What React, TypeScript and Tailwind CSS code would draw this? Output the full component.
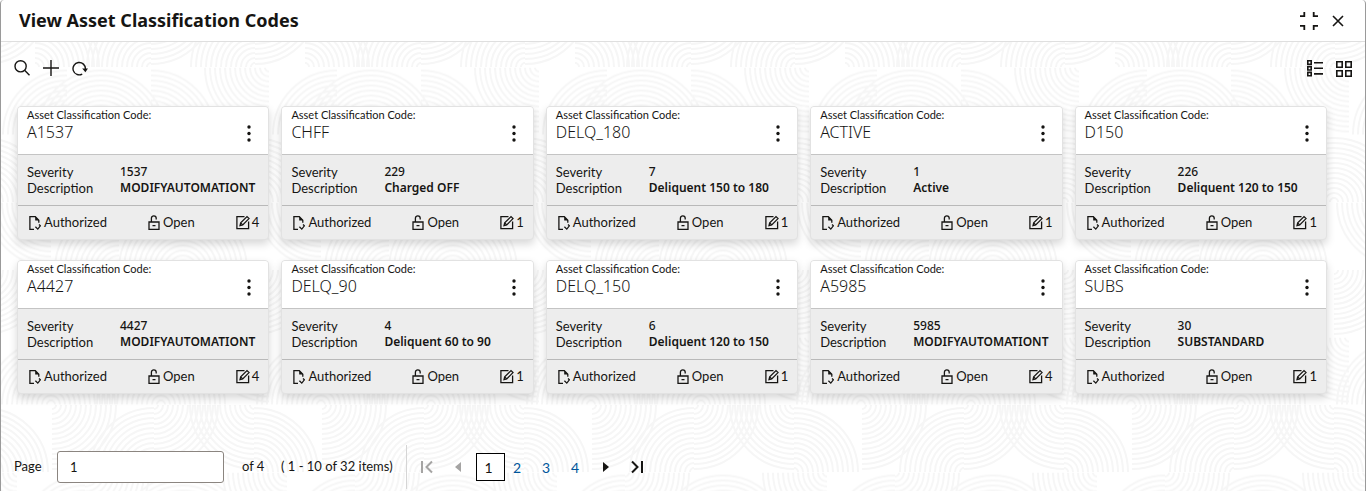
import React from 'react';

type Fan = { x: number; y: number; dx: 1 | -1; dy: 1 | -1 };

const RINGS = Array.from({ length: 13 }, (_, i) => 4 + i * 5);

// quarter-circle fans, one list per row of the repeating backdrop
const FAN_ROWS: Fan[][] = [
  [
    { x: 34, y: 67, dx: 1, dy: -1 },
    { x: 150, y: 67, dx: -1, dy: -1 },
    { x: 150, y: 0, dx: 1, dy: 1 },
    { x: 254, y: 67, dx: -1, dy: -1 },
    { x: 254, y: 0, dx: 1, dy: 1 },
  ],
  [
    { x: 100, y: 67, dx: -1, dy: -1 },
    { x: 100, y: 67, dx: 1, dy: -1 },
    { x: 150, y: 67, dx: 1, dy: -1 },
    { x: 268, y: 0, dx: -1, dy: 1 },
    { x: 66, y: 67, dx: -1, dy: -1 },
  ],
  [
    { x: 253, y: 67, dx: 1, dy: -1 },
    { x: 253, y: 67, dx: -1, dy: -1 },
    { x: 130, y: 67, dx: 1, dy: -1 },
    { x: 50, y: 0, dx: 1, dy: 1 },
  ],
  [
    { x: 50, y: 0, dx: -1, dy: 1 },
    { x: 182, y: 67, dx: -1, dy: -1 },
    { x: 182, y: 67, dx: 1, dy: -1 },
    { x: 118, y: 67, dx: -1, dy: -1 },
  ],
  [
    { x: 253, y: 0, dx: 1, dy: 1 },
    { x: 150, y: 0, dx: -1, dy: 1 },
    { x: 150, y: 67, dx: 1, dy: -1 },
  ],
  [
    { x: 50, y: 67, dx: -1, dy: -1 },
    { x: 50, y: 67, dx: 1, dy: -1 },
    { x: 268, y: 0, dx: -1, dy: 1 },
    { x: 160, y: 67, dx: -1, dy: -1 },
    { x: 160, y: 67, dx: 1, dy: -1 },
  ],
  [
    { x: 253, y: 67, dx: 1, dy: -1 },
    { x: 51, y: 0, dx: 1, dy: 1 },
    { x: 153, y: 67, dx: -1, dy: -1 },
    { x: 153, y: 0, dx: 1, dy: 1 },
    { x: 253, y: 0, dx: -1, dy: 1 },
  ],
  [
    { x: 182, y: 67, dx: -1, dy: -1 },
    { x: 182, y: 67, dx: 1, dy: -1 },
    { x: 16, y: 0, dx: -1, dy: 1 },
    { x: 84, y: 67, dx: -1, dy: -1 },
    { x: 84, y: 0, dx: 1, dy: 1 },
  ],
];

const fanPath = ({ x, y, dx, dy }: Fan, shift: number) =>
  RINGS.map(
    (r) => `M${x + shift + dx * r} ${y}A${r} ${r} 0 0 ${dx * dy > 0 ? 1 : 0} ${x + shift} ${y + dy * r}`
  ).join('');

const Backdrop = () => (
  <svg className="absolute inset-0 h-full w-full" aria-hidden="true">
    <defs>
      {FAN_ROWS.map((row, i) => (
        <pattern key={i} id={`fans-${i}`} width="270" height="68" y={i * 67.5 - 42} patternUnits="userSpaceOnUse">
          <path
            d={row.map((fan) => fanPath(fan, 0) + fanPath(fan, -270) + fanPath(fan, 270)).join('')}
            fill="none"
            stroke="#f6f6f6"
            strokeWidth="2"
          />
        </pattern>
      ))}
    </defs>
    {FAN_ROWS.map((_, i) => (
      <rect key={i} y={i * 67.5 - 42} width="100%" height="67.5" fill={`url(#fans-${i})`} />
    ))}
  </svg>
);

const SearchIcon = () => (
  <svg width="16" height="16" viewBox="0 0 16 16" fill="none" stroke="#161513" strokeWidth="1.4">
    <circle cx="6.6" cy="6.3" r="5.6" />
    <path d="M10.6 10.3L15.5 15.2" />
  </svg>
);

const PlusIcon = () => (
  <svg width="16" height="16" viewBox="0 0 16 16" fill="none" stroke="#161513" strokeWidth="1.4">
    <path d="M8 0v16M0 8h16" />
  </svg>
);

const RefreshIcon = () => (
  <svg width="16" height="16" viewBox="0 0 16 16" fill="none" stroke="#161513" strokeWidth="1.4">
    <path d="M10.2 14.1A6.2 6.2 0 1 1 13.4 9" />
    <path d="M10.2 8.5H16l-2.6 3.7z" fill="#161513" stroke="none" />
  </svg>
);

const CollapseIcon = () => (
  <svg width="18" height="18" viewBox="0 0 18 18" fill="none" stroke="#161513" strokeWidth="1.8">
    <path d="M0 4.2h4.3V0M13.7 0v4.2H18M0 13.8h4.3V18M13.7 18v-4.2H18" />
  </svg>
);

const CloseIcon = () => (
  <svg width="12" height="12" viewBox="0 0 12 12" fill="none" stroke="#161513" strokeWidth="1.6">
    <path d="M1 1l10 10M11 1L1 11" />
  </svg>
);

const ListIcon = () => (
  <svg width="16" height="17" viewBox="0 0 16 17" fill="none" stroke="#161513" strokeWidth="1.6">
    <path d="M.8.8h3.4v3.4H.8zM.8 6.6h3.4V10H.8zM.8 12.4h3.4v3.4H.8zM7 2.7h9M7 8.3h9M7 13.9h9" />
  </svg>
);

const GridIcon = () => (
  <svg width="16" height="16" viewBox="0 0 16 16" fill="none" stroke="#161513" strokeWidth="1.6">
    <path d="M.8.8h5.4v5.4H.8zM9.8.8h5.4v5.4H9.8zM.8 9.8h5.4v5.4H.8zM9.8 9.8h5.4v5.4H9.8z" />
  </svg>
);

const DocIcon = () => (
  <svg width="12" height="16" viewBox="0 0 12 16" fill="none" stroke="#161513" strokeWidth="1.3">
    <path d="M5 14.3H.9V1.6h5.4l3.5 3.6v2.6" />
    <path d="M6.2 1.5v4h4z" fill="#161513" stroke="none" />
    <path d="M10 9.5l1.4 1.3-2.6 3.3-2.4-2.3" />
  </svg>
);

const LockIcon = () => (
  <svg width="12" height="16" viewBox="0 0 12 16" fill="none" stroke="#161513" strokeWidth="1.3">
    <path d="M1 7h10v7.4H1zM3.4 7V3.2a2.4 2.4 0 0 1 4.8 0V4.6M4.5 10.7h3" />
  </svg>
);

const EditIcon = () => (
  <svg width="14" height="15" viewBox="0 0 14 15" fill="none" stroke="#161513" strokeWidth="1.3">
    <path d="M8.5 1.7H.9v12h11.7V6.5" />
    <path d="M4 10.6l.7-2.7L11 1.6l2 2-6.3 6.3zM4.7 7.9l2 2" />
  </svg>
);

const CODES = [
  { code: 'A1537', severity: '1537', description: 'MODIFYAUTOMATIONT', edits: 4 },
  { code: 'CHFF', severity: '229', description: 'Charged OFF', edits: 1 },
  { code: 'DELQ_180', severity: '7', description: 'Deliquent 150 to 180', edits: 1 },
  { code: 'ACTIVE', severity: '1', description: 'Active', edits: 1 },
  { code: 'D150', severity: '226', description: 'Deliquent 120 to 150', edits: 1 },
  { code: 'A4427', severity: '4427', description: 'MODIFYAUTOMATIONT', edits: 4 },
  { code: 'DELQ_90', severity: '4', description: 'Deliquent 60 to 90', edits: 1 },
  { code: 'DELQ_150', severity: '6', description: 'Deliquent 120 to 150', edits: 1 },
  { code: 'A5985', severity: '5985', description: 'MODIFYAUTOMATIONT', edits: 4 },
  { code: 'SUBS', severity: '30', description: 'SUBSTANDARD', edits: 1 },
];

const CodeCard = ({ code, severity, description, edits }: (typeof CODES)[number]) => (
  <article className="overflow-hidden rounded border border-[#e2e2e2] bg-[#ededed] shadow-[0_4px_8px_rgba(0,0,0,0.16)]">
    <div className="flex h-12 items-start justify-between border-b border-[#c4c4c4] bg-white pr-[17px] pl-[9px]">
      <div>
        <p className="text-[11px] leading-4">Asset Classification Code:</p>
        <h2 className="font-['Noto_Sans',sans-serif] text-[16px] leading-[18px] font-light">{code}</h2>
      </div>
      <button type="button" aria-label={`Actions for ${code}`} className="mt-[18px]">
        <svg width="4" height="17" viewBox="0 0 4 17" fill="#161513">
          <circle cx="2" cy="2" r="1.7" />
          <circle cx="2" cy="8.5" r="1.7" />
          <circle cx="2" cy="15" r="1.7" />
        </svg>
      </button>
    </div>
    <dl className="grid h-[51px] grid-cols-[93px_1fr] content-center border-b border-[#b9b9b9] pb-px pl-[9px] text-[13px] leading-4 whitespace-nowrap">
      <dt>Severity</dt>
      <dd className="font-['Noto_Sans',sans-serif] text-[12px] font-medium">{severity}</dd>
      <dt>Description</dt>
      <dd className="font-['Noto_Sans',sans-serif] text-[12px] font-semibold">{description}</dd>
    </dl>
    <div className="flex h-[33px] items-center justify-between pr-[9px] pl-[11px] text-[13px]">
      <span className="flex items-center gap-[3px]"><DocIcon />Authorized</span>
      <span className="flex items-center gap-[3px]"><LockIcon />Open</span>
      <span className="flex items-center gap-[2px]"><EditIcon />{edits}</span>
    </div>
  </article>
);

const Pager = () => (
  <nav aria-label="Pagination" className="flex h-11 items-center text-[13px]">
    <label htmlFor="page" className="w-[43px]">Page</label>
    <input
      id="page"
      type="text"
      defaultValue="1"
      className="h-8 w-[167px] rounded-[3px] border border-[#8b8580] bg-white px-3"
    />
    <span className="w-[57px] pl-[18px]">of 4</span>
    <span className="w-[125px]">( 1 - 10 of 32 items)</span>
    <div className="flex h-11 items-center border-l border-[#d5d5d5] pl-[14px]">
      <button type="button" disabled aria-label="First page">
        <svg width="12" height="14" viewBox="0 0 12 14" fill="none" stroke="#a5a4a3" strokeWidth="2">
          <path d="M1 1v12M11 1.5L5.5 7l5.5 5.5" />
        </svg>
      </button>
      <button type="button" disabled aria-label="Previous page" className="ml-[22px]">
        <svg width="6" height="10" viewBox="0 0 6 10" fill="#a5a4a3"><path d="M6 0v10L0 5z" /></svg>
      </button>
      <button type="button" aria-current="page" className="ml-[15px] h-7 w-[29px] border border-black bg-white pr-1 text-[14px]">1</button>
      {['2', '3', '4'].map((page) => (
        <a key={page} href={`#page-${page}`} className="w-[29px] pl-2 text-[14px] text-[#00569b]">{page}</a>
      ))}
      <button type="button" aria-label="Next page" className="ml-[11px]">
        <svg width="6" height="10" viewBox="0 0 6 10" fill="#161513"><path d="M0 0v10l6-5z" /></svg>
      </button>
      <button type="button" aria-label="Last page" className="ml-[22px]">
        <svg width="12" height="14" viewBox="0 0 12 14" fill="none" stroke="#161513" strokeWidth="2">
          <path d="M11 1v12M1 1.5L6.5 7 1 12.5" />
        </svg>
      </button>
    </div>
  </nav>
);

const App = () => {
  return (
    <div className="flex min-h-screen flex-col rounded-t border-x border-[#9a9a9a] bg-white font-[Lato,sans-serif] text-[#161513]">
      <header className="flex h-[42px] items-center justify-between border-b border-[#dfdfdf] pr-[21px] pl-[18px]">
        <h1 className="font-['Noto_Sans',sans-serif] text-[18px] font-bold">View Asset Classification Codes</h1>
        <div className="flex items-center gap-[14px]">
          <button type="button" aria-label="Collapse"><CollapseIcon /></button>
          <button type="button" aria-label="Close"><CloseIcon /></button>
        </div>
      </header>

      <main className="relative grow">
        <Backdrop />
        <div className="relative">
          <div className="flex h-16 items-start justify-between pt-[18px] pr-[13px] pl-[13px]">
            <div className="flex items-center gap-[13px]">
              <button type="button" aria-label="Search"><SearchIcon /></button>
              <button type="button" aria-label="Add"><PlusIcon /></button>
              <button type="button" aria-label="Refresh"><RefreshIcon /></button>
            </div>
            <div className="flex items-center gap-[13px]">
              <button type="button" aria-label="List view"><ListIcon /></button>
              <button type="button" aria-label="Tile view"><GridIcon /></button>
            </div>
          </div>

          <section className="grid grid-cols-5 gap-x-3 gap-y-5 pr-[38px] pl-4">
            {CODES.map((item) => (
              <CodeCard key={item.code} {...item} />
            ))}
          </section>

          <div className="pt-[51px] pl-[13px]">
            <Pager />
          </div>
        </div>
      </main>
    </div>
  );
};

export default App;
